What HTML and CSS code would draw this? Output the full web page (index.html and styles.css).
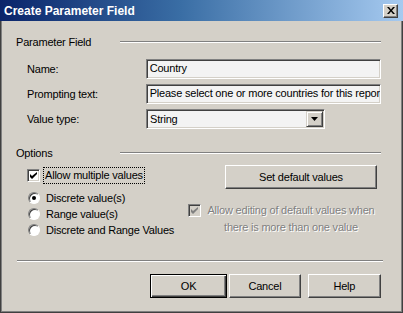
FILE: index.html
```html
<!DOCTYPE html>
<html lang="en">

<head>
    <meta charset="UTF-8">
    <title>Create Parameter Field</title>
    <link rel="stylesheet" href="styles.css">
</head>

<body>
    <div class="window">
        <div class="titlebar">
            <span class="title">Create Parameter Field</span>
            <a href="javascript:;" class="close">
                <svg width="8" height="7" viewBox="0 0 8 7">
                    <path d="M0 0h2l2 2.5 2-2.5h2l-3 3.5 3 3.5h-2l-2-2.5-2 2.5h-2l3-3.5z" fill="#000" />
                </svg>
            </a>
        </div>
        <div class="content">
            <div class="group_head">
                <span class="group_label">Parameter Field</span>
                <span class="rule"></span>
            </div>
            <div class="form">
                <div class="row">
                    <label>Name:</label>
                    <div class="field">Country</div>
                </div>
                <div class="row">
                    <label>Prompting text:</label>
                    <div class="field">Please select one or more countries for this repor</div>
                </div>
                <div class="row">
                    <label>Value type:</label>
                    <div class="field select">
                        <span class="select_text">String</span>
                        <span class="drop">
                            <svg width="7" height="4" viewBox="0 0 7 4">
                                <path d="M0 0h7l-3.5 4z" fill="#000" />
                            </svg>
                        </span>
                    </div>
                </div>
            </div>
            <div class="group_head options_head">
                <span class="group_label">Options</span>
                <span class="rule"></span>
            </div>
            <div class="options">
                <div class="col_l">
                    <div class="check_row">
                        <span class="box">
                            <svg width="7" height="7" viewBox="0 0 7 7">
                                <path d="M0 2l2 2 5-4v2l-5 5-2-2z" fill="#000" />
                            </svg>
                        </span>
                        <span class="focus">Allow multiple values</span>
                    </div>
                    <ul class="radios">
                        <li><span class="radio on"></span>Discrete value(s)</li>
                        <li><span class="radio"></span>Range value(s)</li>
                        <li><span class="radio"></span>Discrete and Range Values</li>
                    </ul>
                </div>
                <div class="col_r">
                    <a href="javascript:;" class="button set_btn">Set default values</a>
                    <div class="check_row disabled">
                        <span class="box">
                            <svg width="7" height="7" viewBox="0 0 7 7">
                                <path d="M0 2l2 2 5-4v2l-5 5-2-2z" fill="#808080" />
                            </svg>
                        </span>
                        <span class="dis_text">Allow editing of default values when there is more than one value</span>
                    </div>
                </div>
            </div>
            <div class="rule bottom_rule"></div>
            <div class="buttons">
                <a href="javascript:;" class="button ok">OK</a>
                <a href="javascript:;" class="button cancel">Cancel</a>
                <a href="javascript:;" class="button help">Help</a>
            </div>
        </div>
    </div>
</body>

</html>
```

FILE: styles.css
```css
* {
    padding: 0;
    margin: 0;
    box-sizing: border-box;
}

a {
    text-decoration: none;
    color: #000;
}

body {
    background-color: #d4d0c8;
    font-family: "Liberation Sans", Arial, sans-serif;
    font-size: 11px;
    letter-spacing: -0.2px;
    color: #000;
}

.window {
    width: 403px;
    height: 313px;
    background-color: #d4d0c8;
    border-left: 1px solid #404040;
    border-right: 1px solid #404040;
    border-bottom: 1px solid #404040;
    box-shadow: inset 1px 0 #808080, inset -1px -1px #808080;
}

.titlebar {
    display: flex;
    align-items: center;
    justify-content: space-between;
    height: 21px;
    margin-left: -1px;
    margin-right: -1px;
    padding: 0 5px 0 4px;
    background: linear-gradient(to right, #0a246a 0%, #3a6ea5 45%, #a6caf0 100%);
}

.title {
    font-size: 12px;
    font-weight: bold;
    letter-spacing: 0;
    color: #fff;
}

.close {
    display: flex;
    align-items: center;
    justify-content: center;
    width: 15px;
    height: 14px;
    background-color: #d4d0c8;
    border-top: 1px solid #fff;
    border-left: 1px solid #fff;
    border-right: 1px solid #404040;
    border-bottom: 1px solid #404040;
    box-shadow: inset -1px -1px #808080;
}

.content {
    padding: 14px 21px 0 15px;
}

.group_head {
    display: flex;
    align-items: center;
    height: 14px;
}

.group_label {
    width: 104px;
}

.rule {
    flex: 1;
    height: 2px;
    border-top: 1px solid #808080;
    border-bottom: 1px solid #fff;
}

.form {
    margin-top: 10px;
}

.row {
    display: flex;
    align-items: center;
    height: 20px;
    margin-bottom: 5px;
}

.row label {
    width: 130px;
    padding-left: 11px;
}

.field {
    width: 236px;
    height: 20px;
    line-height: 17px;
    padding-left: 3px;
    white-space: nowrap;
    overflow: hidden;
    background-color: #f3f3f3;
    border-top: 1px solid #808080;
    border-left: 1px solid #808080;
    border-right: 1px solid #fff;
    border-bottom: 1px solid #fff;
    box-shadow: inset 1px 1px #404040, inset -1px -1px #d4d0c8;
}

.select {
    display: flex;
    align-items: center;
    justify-content: space-between;
    width: 179px;
    padding-right: 1px;
}

.drop {
    display: flex;
    align-items: center;
    justify-content: center;
    width: 17px;
    height: 16px;
    background-color: #d4d0c8;
    border-top: 1px solid #d4d0c8;
    border-left: 1px solid #d4d0c8;
    border-right: 1px solid #404040;
    border-bottom: 1px solid #404040;
    box-shadow: inset 1px 1px #fff, inset -1px -1px #808080;
}

.options_head {
    margin-top: 17px;
}

.options {
    display: flex;
    margin-top: 5px;
    padding-left: 11px;
}

.col_l {
    width: 161px;
}

.check_row {
    display: flex;
    align-items: center;
    margin-top: 4px;
    height: 13px;
}

.box {
    display: flex;
    align-items: center;
    justify-content: center;
    width: 13px;
    height: 13px;
    margin-right: 4px;
    flex-shrink: 0;
    background-color: #fff;
    border-top: 1px solid #808080;
    border-left: 1px solid #808080;
    border-right: 1px solid #fff;
    border-bottom: 1px solid #fff;
    box-shadow: inset 1px 1px #404040, inset -1px -1px #d4d0c8;
}

.focus {
    padding: 0 1px;
    line-height: 15px;
    outline: 1px dotted #000;
}

.radios {
    list-style: none;
    margin-top: 8px;
}

.radios li {
    display: flex;
    align-items: center;
    height: 16px;
    white-space: nowrap;
}

.radio {
    position: relative;
    flex-shrink: 0;
    width: 12px;
    height: 12px;
    margin: 0 6px 0 1px;
    border-radius: 50%;
    background-color: #fff;
    border: 1px solid;
    border-color: #808080 #fff #fff #808080;
    box-shadow: inset 1px 1px #404040;
}

.radio.on::after {
    content: '';
    position: absolute;
    left: 3px;
    top: 3px;
    width: 4px;
    height: 4px;
    border-radius: 50%;
    background-color: #000;
}

.col_r {
    width: 189px;
}

.button {
    display: flex;
    align-items: center;
    justify-content: center;
    height: 24px;
    background-color: #d4d0c8;
    border-top: 1px solid #fff;
    border-left: 1px solid #fff;
    border-right: 1px solid #404040;
    border-bottom: 1px solid #404040;
    box-shadow: inset -1px -1px #808080;
}

.set_btn {
    width: 152px;
    margin-left: 37px;
}

.disabled {
    align-items: flex-start;
    height: auto;
    margin-top: 14px;
}

.disabled .box {
    margin-top: 1px;
    background-color: #d4d0c8;
}

.dis_text {
    width: 172px;
    line-height: 17px;
    margin-top: -1px;
    text-align: center;
    color: #808080;
    text-shadow: 1px 1px #fff;
}

.bottom_rule {
    flex: none;
    margin: 22px -2px 0 1px;
}

.buttons {
    display: flex;
    margin-top: 12px;
    padding-left: 134px;
}

.ok {
    width: 80px;
    border: 1px solid #000;
    box-shadow: inset 1px 1px #fff, inset -1px -1px #404040, inset -2px -2px #808080;
}

.cancel {
    width: 74px;
    margin-left: 2px;
}

.help {
    width: 76px;
    margin-left: 7px;
}
```
